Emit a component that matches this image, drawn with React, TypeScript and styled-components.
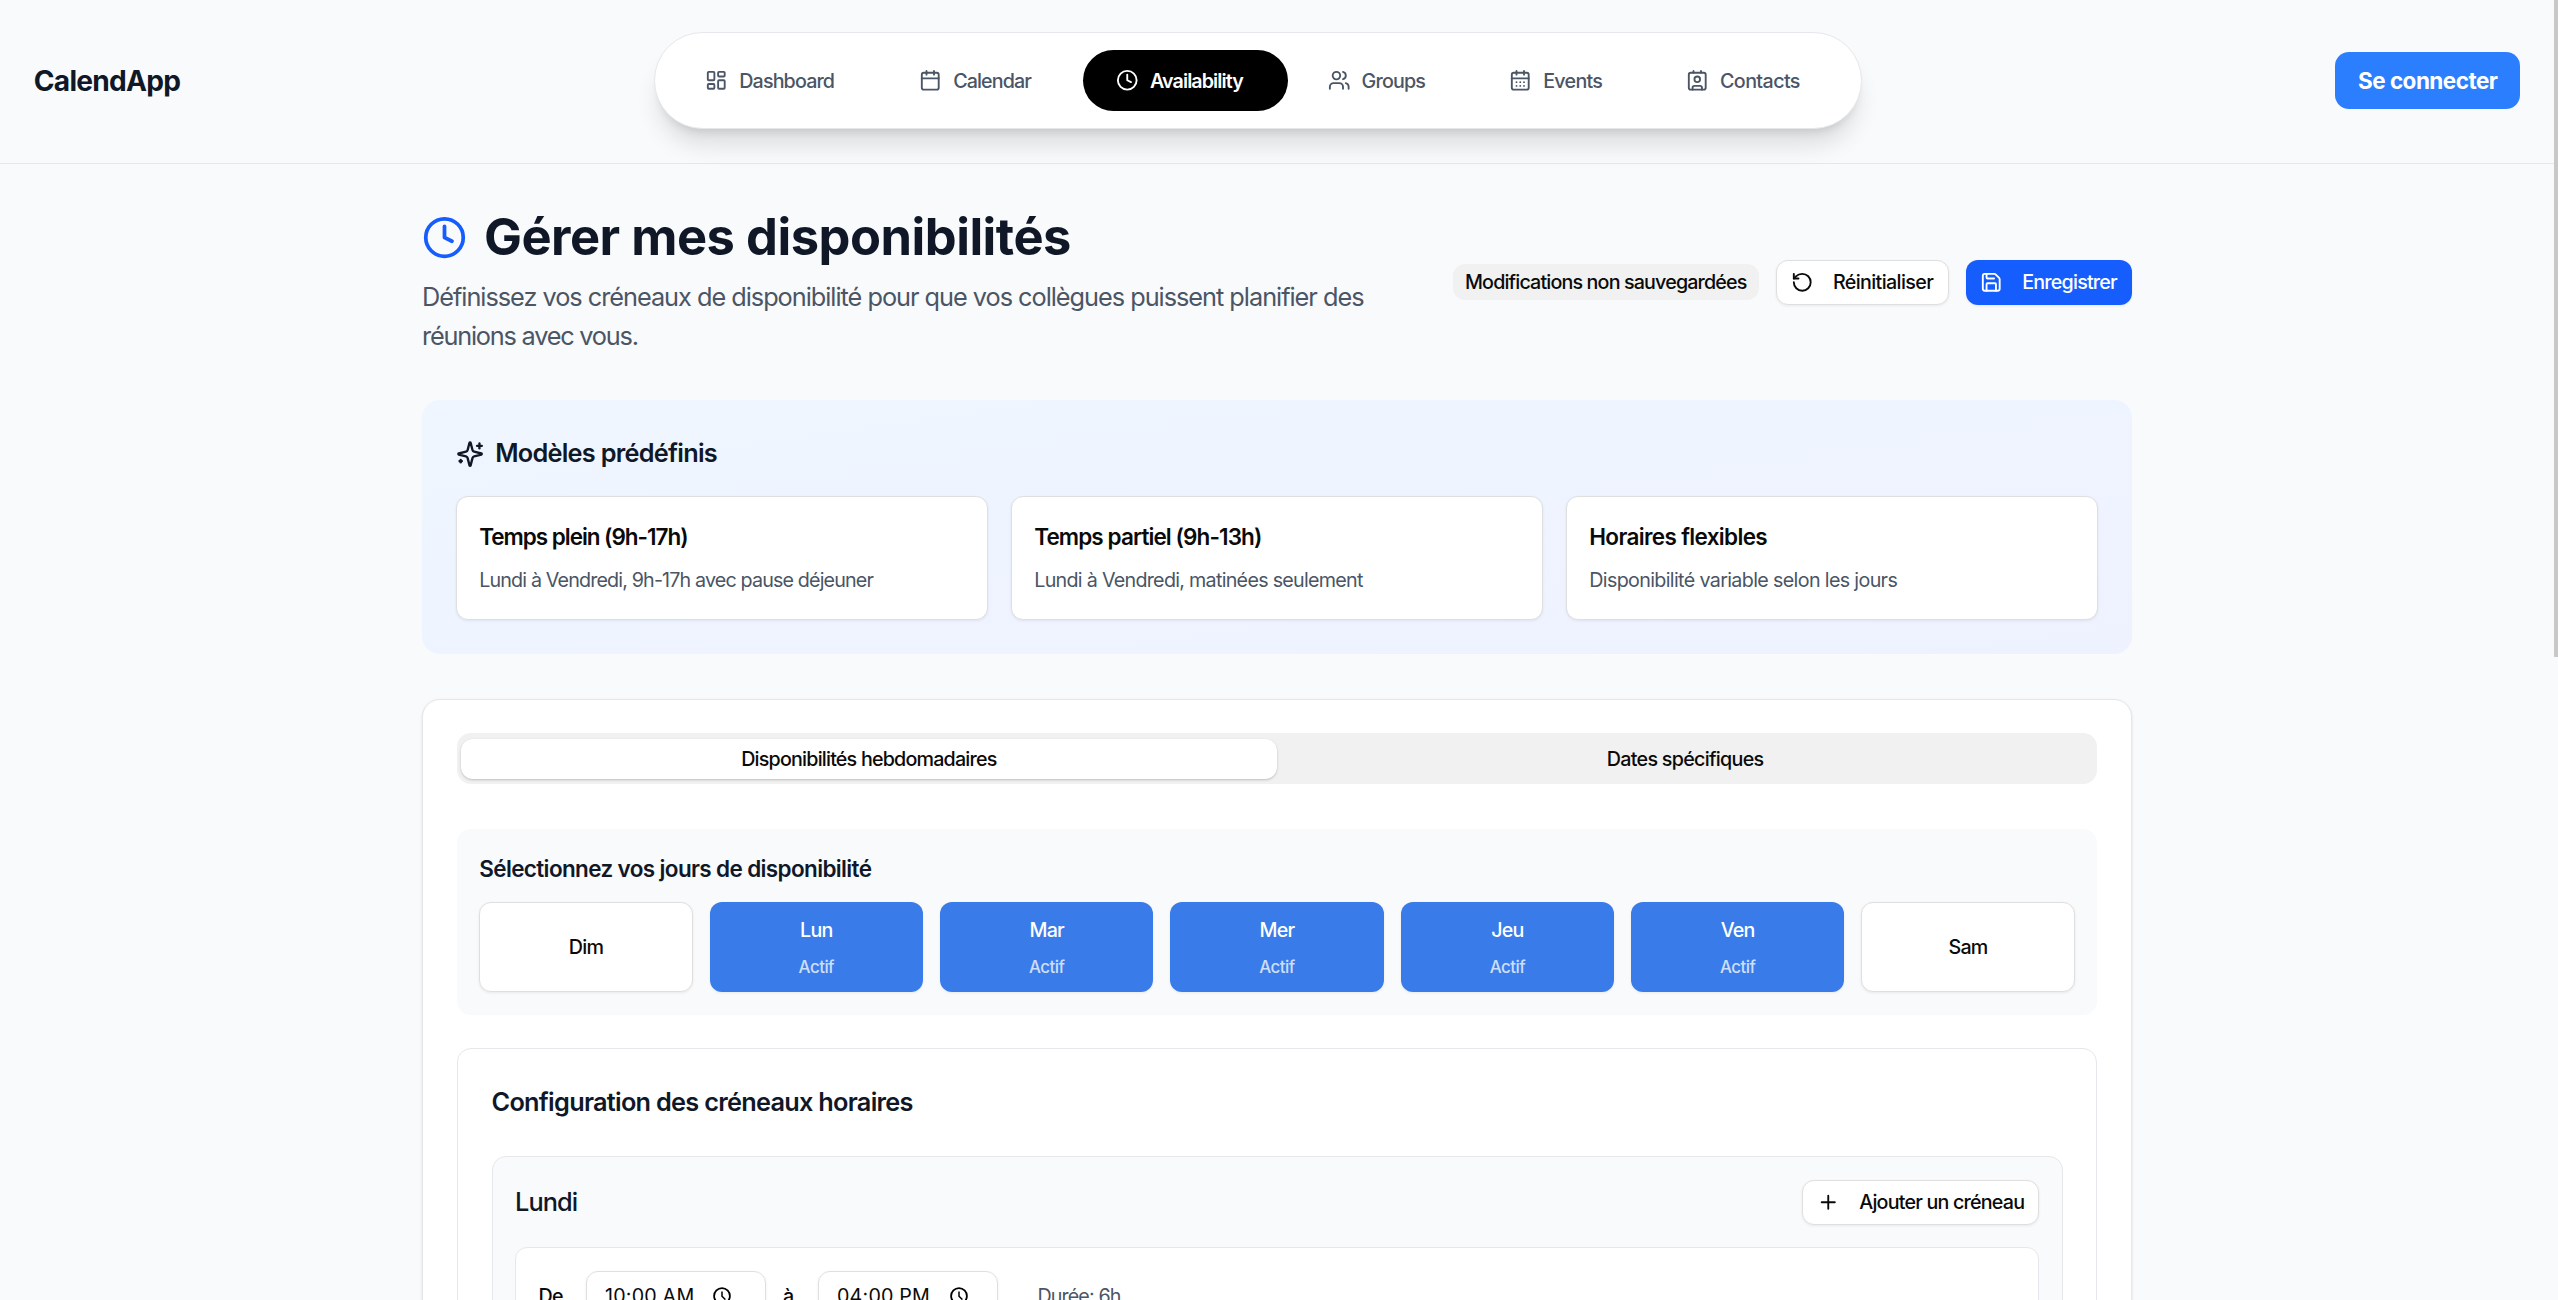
import React from 'react';
import styled, { createGlobalStyle, css } from 'styled-components';
import {
  LayoutDashboard,
  Calendar,
  Clock,
  Users,
  CalendarDays,
  Contact,
  RotateCcw,
  Save,
  Plus,
} from 'lucide-react';

const Global = createGlobalStyle`
  *, *::before, *::after { box-sizing: border-box; }
  html { font-size: 22.5px; }
  body {
    margin: 0;
    overflow: hidden;
    background: #f9fafc;
    color: #0a0a0a;
    font-family: Inter, "Liberation Sans", sans-serif;
    line-height: 1.5;
  }
  h1, h2, h3, h4, p { margin: 0; }
  button { font: inherit; color: inherit; border: 0; padding: 0; cursor: pointer; }
  svg { display: block; flex: none; }
`;

const Screen = styled.div`
  display: grid;
  grid-template-columns: minmax(0, 1fr) 4px;
  height: 1300px;
  overflow: hidden;
`;

const Content = styled.div`
  min-width: 0;
  height: 1300px;
  overflow: hidden;
`;

const ScrollThumb = styled.div`
  height: 657px;
  background: #c8c8c8;
`;

const Label = styled.span<{ $track?: number; $drop?: number }>`
  display: inline-block;
  white-space: nowrap;
  letter-spacing: ${(p) => p.$track ?? -0.04}em;
  transform: translateY(${(p) => p.$drop ?? 1}px);
`;

/* Header */

const Header = styled.header`
  display: flex;
  align-items: center;
  justify-content: space-between;
  height: 164px;
  padding: 0 1.5rem 2px;
  border-bottom: 1px solid #e5e7eb;
`;

const Brand = styled.div`
  width: 146.5px;
  font-size: 1.25rem;
  font-weight: 700;
  color: #101828;
`;

const Nav = styled.nav`
  display: flex;
  gap: 0.25rem;
  padding: 0.75rem;
  background: #fff;
  border: 1px solid #e5e7eb;
  border-radius: 999px;
  box-shadow:
    0 20px 25px -5px rgba(0, 0, 0, 0.12),
    0 8px 10px -6px rgba(0, 0, 0, 0.12);
`;

const NavItem = styled.a<{ $active?: boolean; $width: number }>`
  display: flex;
  align-items: center;
  gap: 0.5rem;
  width: ${(p) => p.$width}px;
  height: 2.75rem;
  padding-left: 1.5rem;
  border-radius: 999px;
  font-size: 0.875rem;
  font-weight: 500;
  color: #4a5565;
  ${(p) =>
    p.$active &&
    css`
      background: #000;
      color: #fff;
      font-weight: 600;
    `}
`;

const LoginButton = styled.button`
  width: 185px;
  height: 2.5rem;
  background: #2b7fff;
  color: #fff;
  font-weight: 700;
  border-radius: 14px;
`;

/* Page heading */

const Main = styled.main`
  max-width: 80rem;
  margin: 0 auto;
  padding: 2rem;
`;

const PageHead = styled.div`
  display: flex;
  align-items: center;
  justify-content: space-between;
  margin-bottom: 2rem;
`;

const Intro = styled.div`
  width: 965px;
`;

const Title = styled.h1`
  display: flex;
  align-items: center;
  gap: 0.75rem;
  margin-bottom: 0.5rem;
  font-size: 2.25rem;
  line-height: 2.5rem;
  font-weight: 700;
  color: #101828;
  svg { color: #155dfc; }
`;

const Lead = styled.p`
  font-size: 1.125rem;
  line-height: 1.75rem;
  color: #4a5565;
`;

const Actions = styled.div`
  display: flex;
  align-items: center;
  gap: 0.75rem;
`;

const Badge = styled.span`
  display: flex;
  align-items: center;
  justify-content: center;
  width: 306px;
  height: 36px;
  border-radius: 12px;
  background: #f1f1f1;
  font-size: 0.875rem;
  font-weight: 500;
`;

const outline = css`
  background: #fff;
  border: 1px solid #dfdfdf;
  box-shadow: 0 1px 3px rgba(0, 0, 0, 0.07);
`;

const ActionButton = styled.button<{ $primary?: boolean; $width: number }>`
  display: flex;
  align-items: center;
  gap: 0.875rem;
  width: ${(p) => p.$width}px;
  height: 2rem;
  padding-left: 0.625rem;
  border-radius: 12px;
  font-size: 0.875rem;
  font-weight: 500;
  ${(p) =>
    p.$primary
      ? css`
          background: #155dfc;
          color: #fff;
          box-shadow: 0 1px 3px rgba(0, 0, 0, 0.07);
        `
      : outline}
`;

/* Presets */

const Presets = styled.section`
  margin-bottom: 2rem;
  padding: 1.5rem;
  border-radius: 18px;
  background: linear-gradient(to bottom right, #eff6ff, #eef2ff);
`;

const SectionTitle = styled.h2<{ $gap: string }>`
  display: flex;
  align-items: center;
  gap: 0.5rem;
  margin-bottom: ${(p) => p.$gap};
  font-size: 1.125rem;
  line-height: 1.75rem;
  font-weight: 600;
  color: #101828;
`;

const PresetGrid = styled.div`
  display: grid;
  grid-template-columns: repeat(3, 1fr);
  gap: 1rem;
`;

const PresetCard = styled.button`
  ${outline}
  display: block;
  padding: 1rem;
  border-radius: 12px;
  text-align: left;
`;

const PresetName = styled.div`
  margin-bottom: 0.5rem;
  font-weight: 600;
`;

const PresetText = styled.div`
  height: 32px;
  font-size: 0.875rem;
  line-height: 32px;
  color: #4a5565;
`;

/* Weekly panel */

const Panel = styled.section`
  height: 900px;
  padding: 1.5rem;
  background: #fff;
  border: 1px solid #e5e7eb;
  border-radius: 18px;
  box-shadow:
    0 1px 3px rgba(0, 0, 0, 0.1),
    0 1px 2px -1px rgba(0, 0, 0, 0.1);
`;

const Tabs = styled.div`
  display: grid;
  grid-template-columns: 1fr 1fr;
  align-items: center;
  height: 2.25rem;
  margin-bottom: 2rem;
  padding: 0 4px;
  border-radius: 14px;
  background: #f1f1f1;
`;

const Tab = styled.button<{ $active?: boolean }>`
  height: 40px;
  border-radius: 12px;
  font-size: 0.875rem;
  font-weight: 500;
  background: transparent;
  ${(p) =>
    p.$active &&
    css`
      background: #fff;
      box-shadow:
        0 1px 3px rgba(0, 0, 0, 0.12),
        0 1px 2px rgba(0, 0, 0, 0.1);
    `}
`;

const DaysBox = styled.div`
  margin-bottom: 1.5rem;
  padding: 1rem;
  border-radius: 14px;
  background: #f9fafc;
`;

const DaysTitle = styled.h3`
  margin-bottom: 0.75rem;
  font-size: 1rem;
  font-weight: 600;
  color: #101828;
`;

const DayGrid = styled.div`
  display: grid;
  grid-template-columns: repeat(7, 1fr);
  gap: 0.75rem;
`;

const Day = styled.button<{ $active?: boolean }>`
  display: flex;
  flex-direction: column;
  align-items: center;
  justify-content: center;
  gap: 0.5rem;
  height: 4rem;
  border-radius: 12px;
  font-size: 0.875rem;
  line-height: 1.25rem;
  font-weight: 500;
  ${outline}
  ${(p) =>
    p.$active &&
    css`
      background: #387be9;
      border: 0;
      color: #fff;
    `}
`;

const DayState = styled.span`
  padding-top: 1px;
  font-size: 0.75rem;
  line-height: 1rem;
  letter-spacing: -0.03em;
  opacity: 0.75;
`;

const Config = styled.div`
  height: 700px;
  padding: 1.5rem;
  border: 1px solid #e5e7eb;
  border-radius: 14px;
`;

const DayCard = styled.div`
  height: 500px;
  padding: 1rem;
  border: 1px solid #e5e7eb;
  border-radius: 14px;
  background: #f9fafc;
`;

const DayHead = styled.div`
  display: flex;
  align-items: center;
  justify-content: space-between;
  margin-bottom: 1rem;
`;

const DayName = styled.h4`
  font-size: 1.125rem;
  font-weight: 500;
  color: #101828;
`;

const SlotRow = styled.div`
  display: flex;
  align-items: center;
  padding: 1rem;
  background: #fff;
  border: 1px solid #e5e7eb;
  border-radius: 12px;
  font-size: 0.875rem;
`;

const SlotLabel = styled.label<{ $width: number; $indent?: number }>`
  width: ${(p) => p.$width}px;
  padding-left: ${(p) => p.$indent ?? 0}px;
  font-weight: 500;
`;

const TimeField = styled.div<{ $gap: number }>`
  display: flex;
  align-items: center;
  gap: ${(p) => p.$gap}px;
  width: 180px;
  height: 2.25rem;
  padding-left: 18px;
  border: 1px solid #dfdfdf;
  border-radius: 12px;
  box-shadow: 0 1px 3px rgba(0, 0, 0, 0.07);
`;

const Duration = styled.span`
  padding-left: 1.75rem;
  color: #4a5565;
`;

const PickerIcon = () => (
  <svg width="18" height="18" viewBox="0 0 18 18" fill="none" stroke="#000">
    <circle cx="9" cy="9" r="7.9" strokeWidth="1.8" />
    <path d="M9 4.4V9.3L12.4 12.6" strokeWidth="1.5" />
  </svg>
);

const SparklesIcon = () => (
  <svg
    width="28.125"
    height="28.125"
    viewBox="0 0 24 24"
    fill="none"
    stroke="currentColor"
    strokeWidth="2"
    strokeLinecap="round"
    strokeLinejoin="round"
  >
    <path d="M9.937 15.5A2 2 0 0 0 8.5 14.063l-6.135-1.582a.5.5 0 0 1 0-.962L8.5 9.936A2 2 0 0 0 9.937 8.5l1.582-6.135a.5.5 0 0 1 .963 0L14.063 8.5A2 2 0 0 0 15.5 9.937l6.135 1.581a.5.5 0 0 1 0 .964L15.5 14.063a2 2 0 0 0-1.437 1.437l-1.582 6.135a.5.5 0 0 1-.963 0z" />
    <path d="M20 3v4" />
    <path d="M22 5h-4" />
    <path d="M4 17v2" />
    <path d="M5 18H3" />
  </svg>
);

const navItems = [
  { label: 'Dashboard', icon: LayoutDashboard, width: 208.3, track: -0.043 },
  { label: 'Calendar', icon: Calendar, width: 191.3, track: -0.044 },
  { label: 'Availability', icon: Clock, width: 205.9, track: -0.047, active: true },
  { label: 'Groups', icon: Users, width: 176, track: -0.041 },
  { label: 'Events', icon: CalendarDays, width: 171.2, track: -0.036 },
  { label: 'Contacts', icon: Contact, width: 191.3, track: -0.03 },
];

const presets = [
  {
    name: 'Temps plein (9h-17h)',
    nameTrack: -0.046,
    text: 'Lundi à Vendredi, 9h-17h avec pause déjeuner',
    textTrack: -0.0425,
  },
  {
    name: 'Temps partiel (9h-13h)',
    nameTrack: -0.04,
    text: 'Lundi à Vendredi, matinées seulement',
    textTrack: -0.036,
  },
  {
    name: 'Horaires flexibles',
    nameTrack: -0.029,
    text: 'Disponibilité variable selon les jours',
    textTrack: -0.0325,
  },
];

const days = [
  { name: 'Dim', active: false },
  { name: 'Lun', active: true },
  { name: 'Mar', active: true },
  { name: 'Mer', active: true },
  { name: 'Jeu', active: true },
  { name: 'Ven', active: true },
  { name: 'Sam', active: false },
];

export default function App() {
  return (
    <Screen>
      <Global />
      <Content>
        <Header>
          <Brand>
            <Label $track={-0.026}>CalendApp</Label>
          </Brand>
          <Nav>
            {navItems.map(({ label, icon: Icon, width, track, active }) => (
              <NavItem key={label} $width={width} $active={active}>
                <Icon size={22.5} />
                <Label $track={track}>{label}</Label>
              </NavItem>
            ))}
          </Nav>
          <LoginButton>
            <Label $track={-0.023} $drop={0}>
              Se connecter
            </Label>
          </LoginButton>
        </Header>

        <Main>
          <PageHead>
            <Intro>
              <Title>
                <Clock size={45} />
                <Label $track={-0.0095} $drop={0}>
                  Gérer mes disponibilités
                </Label>
              </Title>
              <Lead>
                <Label $track={-0.0403} $drop={0}>
                  Définissez vos créneaux de disponibilité pour que vos collègues puissent planifier
                  des
                </Label>{' '}
                <Label $track={-0.048} $drop={0}>
                  réunions avec vous.
                </Label>
              </Lead>
            </Intro>
            <Actions>
              <Badge>
                <Label $track={-0.0426}>Modifications non sauvegardées</Label>
              </Badge>
              <ActionButton $width={173.5}>
                <RotateCcw size={22.5} />
                <Label $track={-0.031}>Réinitialiser</Label>
              </ActionButton>
              <ActionButton $primary $width={166}>
                <Save size={22.5} />
                <Label $track={-0.04}>Enregistrer</Label>
              </ActionButton>
            </Actions>
          </PageHead>

          <Presets>
            <SectionTitle $gap="1rem">
              <SparklesIcon />
              <Label $track={-0.0286} $drop={-1}>
                Modèles prédéfinis
              </Label>
            </SectionTitle>
            <PresetGrid>
              {presets.map((p) => (
                <PresetCard key={p.name}>
                  <PresetName>
                    <Label $track={p.nameTrack}>{p.name}</Label>
                  </PresetName>
                  <PresetText>
                    <Label $track={p.textTrack} $drop={0}>
                      {p.text}
                    </Label>
                  </PresetText>
                </PresetCard>
              ))}
            </PresetGrid>
          </Presets>

          <Panel>
            <Tabs>
              <Tab $active>
                <Label>Disponibilités hebdomadaires</Label>
              </Tab>
              <Tab>
                <Label $track={-0.035}>Dates spécifiques</Label>
              </Tab>
            </Tabs>

            <DaysBox>
              <DaysTitle>
                <Label $track={-0.0282} $drop={0}>
                  Sélectionnez vos jours de disponibilité
                </Label>
              </DaysTitle>
              <DayGrid>
                {days.map((d) => (
                  <Day key={d.name} $active={d.active}>
                    <Label $drop={0}>{d.name}</Label>
                    {d.active && <DayState>Actif</DayState>}
                  </Day>
                ))}
              </DayGrid>
            </DaysBox>

            <Config>
              <SectionTitle $gap="1.5rem">
                <Label $track={-0.0284} $drop={-1}>
                  Configuration des créneaux horaires
                </Label>
              </SectionTitle>
              <DayCard>
                <DayHead>
                  <DayName>
                    <Label $track={-0.036} $drop={0}>
                      Lundi
                    </Label>
                  </DayName>
                  <ActionButton $width={237}>
                    <Plus size={22.5} />
                    <Label>Ajouter un créneau</Label>
                  </ActionButton>
                </DayHead>
                <SlotRow>
                  <SlotLabel $width={47.5}>
                    <Label>De</Label>
                  </SlotLabel>
                  <TimeField $gap={19}>
                    <Label $track={0.01}>10:00 AM</Label>
                    <PickerIcon />
                  </TimeField>
                  <SlotLabel $width={52} $indent={17}>
                    <Label>à</Label>
                  </SlotLabel>
                  <TimeField $gap={20}>
                    <Label $track={0.01}>04:00 PM</Label>
                    <PickerIcon />
                  </TimeField>
                  <Duration>
                    <Label $track={-0.043}>Durée: 6h</Label>
                  </Duration>
                </SlotRow>
              </DayCard>
            </Config>
          </Panel>
        </Main>
      </Content>
      <ScrollThumb />
    </Screen>
  );
}
